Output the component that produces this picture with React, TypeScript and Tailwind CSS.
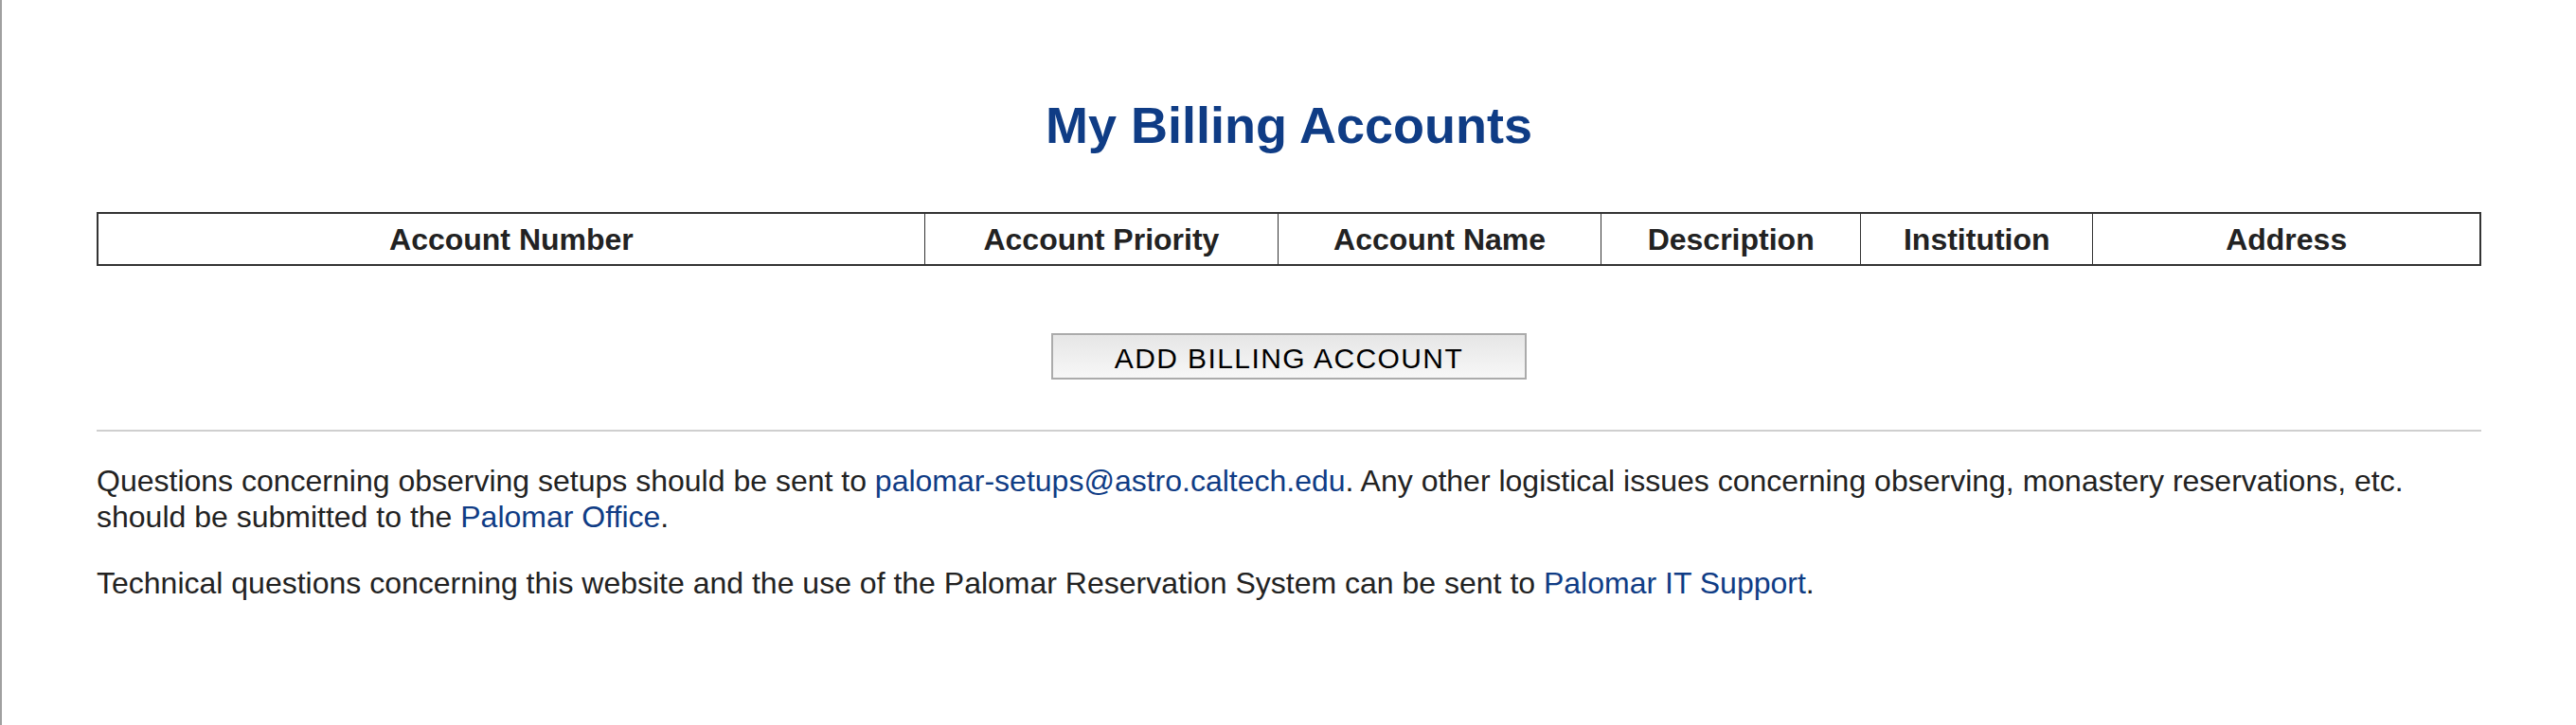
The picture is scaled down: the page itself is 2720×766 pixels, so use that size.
export default function App() {
  const columns = [
    { label: "Account Number", width: "w-[873px]" },
    { label: "Account Priority", width: "w-[373px]" },
    { label: "Account Name", width: "w-[341px]" },
    { label: "Description", width: "w-[274px]" },
    { label: "Institution", width: "w-[245px]" },
    { label: "Address", width: "w-[409px]" },
  ];

  return (
    <div className="min-h-[766px] border-l-2 border-[#a0a0a0] bg-white font-['Liberation_Sans',Arial,sans-serif] text-[#222]">
      <div className="px-[100px] pt-[102px]">
        <h1 className="text-center text-[54px] leading-[60px] font-bold text-[#0f3c85]">
          My Billing Accounts
        </h1>

        <table className="mt-[62px] w-full table-fixed border-collapse border-2 border-[#333]">
          <colgroup>
            {columns.map((c) => (
              <col key={c.label} className={c.width} />
            ))}
          </colgroup>
          <thead>
            <tr>
              {columns.map((c) => (
                <th
                  key={c.label}
                  className="border border-[#333] pt-[9px] pb-[7px] text-center text-[32px] leading-[37px] font-bold text-[#222]"
                >
                  {c.label}
                </th>
              ))}
            </tr>
          </thead>
        </table>

        <div className="mt-[71px] flex justify-center">
          <button className="flex h-[49px] w-[502px] items-center justify-center border-2 border-[#ababab] bg-gradient-to-b from-[#e6e6e6] to-[#f7f7f7] pt-[3px] text-[30px] tracking-[1.4px] text-black">
            ADD BILLING ACCOUNT
          </button>
        </div>

        <hr className="mt-[53px] border-t-2 border-[#cfcfcf]" />

        <div className="pt-[33px] text-[32px] leading-[38px]">
          <p>
            Questions concerning observing setups should be sent to{" "}
            <a href="#" className="text-[#0f3c85]">
              palomar-setups@astro.caltech.edu
            </a>
            . Any other logistical issues concerning observing, monastery reservations, etc. should be submitted to the{" "}
            <a href="#" className="text-[#0f3c85]">
              Palomar Office
            </a>
            .
          </p>
          <p className="mt-[32px]">
            Technical questions concerning this website and the use of the Palomar Reservation System can be sent to{" "}
            <a href="#" className="text-[#0f3c85]">
              Palomar IT Support
            </a>
            .
          </p>
        </div>
      </div>
    </div>
  );
}
